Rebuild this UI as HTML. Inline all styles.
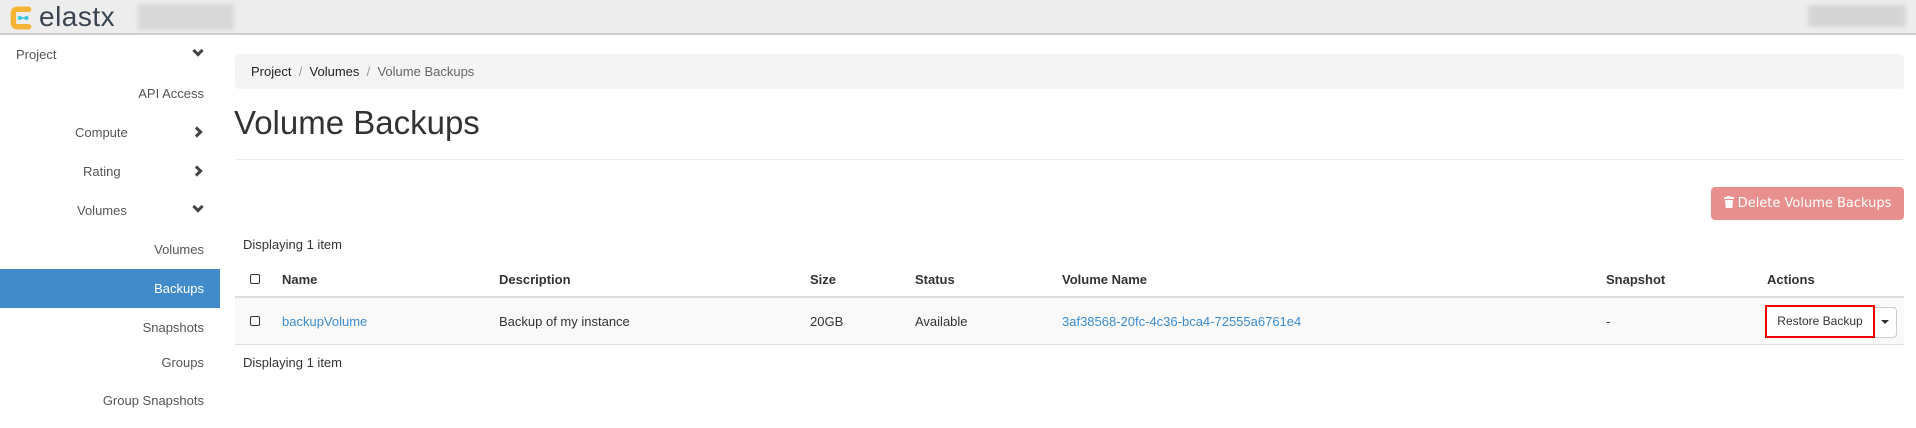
<!DOCTYPE html>
<html><head><meta charset="utf-8">
<style>
*{box-sizing:border-box;margin:0;padding:0}
body{width:1916px;height:428px;overflow:hidden;background:#fff;font-family:"Liberation Sans",Arial,sans-serif;font-size:13px;color:#333;position:relative}
.a{position:absolute;white-space:nowrap}
.hdr{position:absolute;left:0;top:0;width:1916px;height:35px;background:#ededed;border-bottom:2px solid #cfcfcf}
.blur{position:absolute;background:#ddd;filter:blur(2px)}
.side{color:#555;font-size:13px}
.chev{position:absolute;width:8px;height:8px;border-right:3px solid #444;border-bottom:3px solid #444}
.th{font-weight:bold;color:#333}
a,.lnk{color:#3c8dd0}
.cb{position:absolute;width:10px;height:10px;border:1.5px solid #333;border-radius:2px}
</style></head><body>
<div class="hdr"></div>
<svg class="a" style="left:10px;top:6px" width="22" height="24" viewBox="0 0 20 22"><path d="M17 3H7Q3 3 3 7V15Q3 19 7 19H17" fill="none" stroke="#f5b335" stroke-width="5" stroke-linecap="round"/><circle cx="9" cy="11" r="2" fill="#3ac9de"/><circle cx="15" cy="11" r="2" fill="#3ac9de"/><rect x="9" y="10.3" width="6" height="1.4" fill="#3ac9de"/></svg>
<div class="a" style="left:39px;top:1px;font-size:28px;color:#3a4450;letter-spacing:0.5px">elastx</div>
<div class="blur" style="left:138px;top:4px;width:96px;height:26px;background:#d8d8d8"></div>
<div class="blur" style="left:1808px;top:5px;width:98px;height:22px;background:#d5d5d5"></div>

<div class="a side" style="left:16px;top:47px">Project</div>
<div class="chev" style="left:194px;top:47px;transform:rotate(45deg)"></div>
<div class="a side" style="right:1712px;top:86px">API Access</div>
<div class="a side" style="left:75px;top:125px">Compute</div>
<div class="chev" style="left:193px;top:128px;transform:rotate(-45deg)"></div>
<div class="a side" style="left:83px;top:164px">Rating</div>
<div class="chev" style="left:193px;top:167px;transform:rotate(-45deg)"></div>
<div class="a side" style="left:77px;top:203px">Volumes</div>
<div class="chev" style="left:194px;top:203px;transform:rotate(45deg)"></div>
<div class="a side" style="right:1712px;top:242px">Volumes</div>
<div class="a" style="left:0;top:269px;width:220px;height:39px;background:#428bca"></div>
<div class="a side" style="right:1712px;top:281px;color:#fff">Backups</div>
<div class="a side" style="right:1712px;top:320px">Snapshots</div>
<div class="a side" style="right:1712px;top:355px">Groups</div>
<div class="a side" style="right:1712px;top:393px">Group Snapshots</div>

<div class="a" style="left:235px;top:54px;width:1669px;height:35px;background:#f4f4f4;border-radius:4px"></div>
<div class="a" style="left:251px;top:64px;font-size:13px"><span style="color:#222">Project</span><span style="color:#999">&nbsp; /&nbsp; </span><span style="color:#222">Volumes</span><span style="color:#999">&nbsp; /&nbsp; </span><span style="color:#666">Volume Backups</span></div>
<div class="a" style="left:234px;top:104px;font-size:33px;color:#333">Volume Backups</div>
<div class="a" style="left:235px;top:159px;width:1669px;height:1px;background:#eee"></div>

<div class="a" style="left:1711px;top:187px;width:193px;height:33px;background:#e8908e;border-radius:4px;color:#fff;font-family:'DejaVu Sans',sans-serif;font-size:13px;line-height:33px;text-align:center">
<svg width="10" height="12" viewBox="0 0 10 12" style="vertical-align:-1px"><rect x="0" y="1" width="10" height="2" fill="#fff"/><rect x="3" y="0" width="4" height="1.5" fill="#fff"/><path d="M1 4H9L8.3 12H1.7Z" fill="#fff"/></svg> Delete Volume Backups</div>

<div class="a" style="left:243px;top:237px">Displaying 1 item</div>
<div class="cb" style="left:250px;top:274px"></div>
<div class="a th" style="left:282px;top:272px">Name</div>
<div class="a th" style="left:499px;top:272px">Description</div>
<div class="a th" style="left:810px;top:272px">Size</div>
<div class="a th" style="left:915px;top:272px">Status</div>
<div class="a th" style="left:1062px;top:272px">Volume Name</div>
<div class="a th" style="left:1606px;top:272px">Snapshot</div>
<div class="a th" style="left:1767px;top:272px">Actions</div>
<div class="a" style="left:235px;top:296px;width:1669px;height:2px;background:#ddd"></div>
<div class="a" style="left:235px;top:298px;width:1669px;height:47px;background:#f9f9f9;border-bottom:1px solid #ddd"></div>
<div class="cb" style="left:250px;top:316px"></div>
<div class="a lnk" style="left:282px;top:314px">backupVolume</div>
<div class="a" style="left:499px;top:314px">Backup of my instance</div>
<div class="a" style="left:810px;top:314px">20GB</div>
<div class="a" style="left:915px;top:314px">Available</div>
<div class="a lnk" style="left:1062px;top:314px">3af38568-20fc-4c36-bca4-72555a6761e4</div>
<div class="a" style="left:1606px;top:314px">-</div>
<div class="a" style="left:1872px;top:307px;width:25px;height:31px;background:#fff;border:1px solid #ccc;border-radius:0 4px 4px 0"></div>
<div class="a" style="left:1881px;top:320px;width:0;height:0;border-left:4px solid transparent;border-right:4px solid transparent;border-top:4px solid #333"></div>
<div class="a" style="left:1765px;top:305px;width:110px;height:33px;background:#fff;border:2px solid #e00;font-size:12px;line-height:29px;text-align:center;color:#333">Restore Backup</div>
<div class="a" style="left:243px;top:355px">Displaying 1 item</div>
</body></html>
